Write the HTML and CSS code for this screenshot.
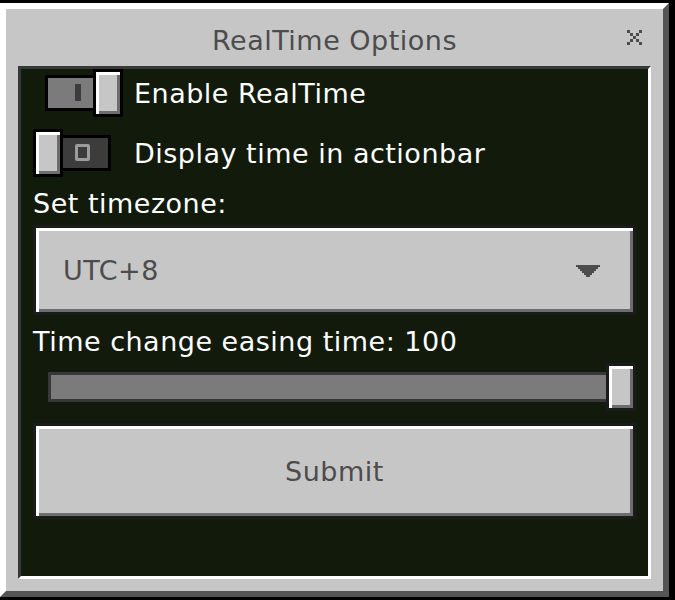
FILE: index.html
```html
<!DOCTYPE html>
<html lang="en">
<head>
    <meta charset="UTF-8">
    <meta name="viewport" content="width=device-width, initial-scale=1.0">
    <title>RealTime Options</title>
    <link rel="stylesheet" href="styles.css">
</head>
<body>

    <div class="form">
        <div class="form-header">
            <span class="form-title">RealTime Options</span>
            <!-- pixel close cross -->
            <svg class="close-btn" width="15" height="15" viewBox="0 0 15 15">
                <path fill="#4c4c4c" d="M0 0h3v3H0zM12 0h3v3h-3zM3 3h3v3H3zM9 3h3v3H9zM6 6h3v3H6zM3 9h3v3H3zM9 9h3v3H9zM0 12h3v3H0zM12 12h3v3h-3z"/>
            </svg>
        </div>

        <div class="form-body">
            <div class="toggle-row">
                <div class="toggle on">
                    <div class="toggle-track"><span class="mark-on"></span></div>
                    <div class="toggle-thumb"></div>
                </div>
                <span class="toggle-label">Enable RealTime</span>
            </div>

            <div class="toggle-row">
                <div class="toggle">
                    <div class="toggle-track"><span class="mark-off"></span></div>
                    <div class="toggle-thumb"></div>
                </div>
                <span class="toggle-label">Display time in actionbar</span>
            </div>

            <div class="field-label">Set timezone:</div>
            <div class="mc-btn dropdown">
                <span>UTC+8</span>
                <svg width="24" height="12" viewBox="0 0 24 12">
                    <path fill="#4c4c4c" d="M0 0H24V2H22V4H20V6H18V8H16V10H14V12H10V10H8V8H6V6H4V4H2V2H0Z"/>
                </svg>
            </div>

            <div class="field-label">Time change easing time: 100</div>
            <div class="slider">
                <div class="slider-track"></div>
                <div class="slider-thumb"></div>
            </div>

            <div class="mc-btn submit-btn">Submit</div>
        </div>
    </div>

</body>
</html>
```

FILE: styles.css
```css
body {
    margin: 0;
    background: #000;
    font-family: "DejaVu Sans", sans-serif;
    font-size: 27px;
    letter-spacing: 0.5px;
}
.form {
    width: 669px;
    height: 594px;
    margin-top: 3px;
    box-sizing: border-box;
    background: #c6c6c6;
    border-top: 6px solid #fff;
    border-left: 6px solid #fff;
    border-right: 6px solid #555;
    border-bottom: 6px solid #555;
    display: flex;
    flex-direction: column;
}
.form-header {
    position: relative;
    height: 57px;
    flex-shrink: 0;
    text-align: center;
}
.form-title {
    display: block;
    padding-top: 7px;
    line-height: 50px;
    color: #4c4c4c;
}
.close-btn {
    position: absolute;
    top: 21px;
    right: 21px;
}

/* dark content panel */
.form-body {
    flex: 1;
    margin: 0 12px 12px 12px;
    padding: 0 12px;
    background: #111a0b;
    border-top: 3px solid #383838;
    border-left: 3px solid #383838;
    border-right: 3px solid #fff;
    border-bottom: 3px solid #fff;
    display: flex;
    flex-direction: column;
    color: #fff;
}

/* toggles */
.toggle-row {
    display: flex;
    align-items: center;
    gap: 11px;
    height: 48px;
    margin-bottom: 12px;
}
.toggle {
    position: relative;
    width: 90px;
    height: 48px;
    flex-shrink: 0;
}
.toggle-track {
    position: absolute;
    left: 12px;
    top: 6px;
    width: 66px;
    height: 36px;
    box-sizing: border-box;
    border: 3px solid #000;
    background: #3c3c3c;
}
.toggle.on .toggle-track {
    background: #7b7b7b;
}
.mark-on {
    position: absolute;
    left: 27px;
    top: 6px;
    width: 6px;
    height: 17px;
    background: #3c3c3c;
}
.mark-off {
    position: absolute;
    left: 27px;
    top: 6px;
    width: 15px;
    height: 17px;
    box-sizing: border-box;
    border: 3px solid #9c9c9c;
    border-radius: 2px;
}
.toggle-thumb {
    position: absolute;
    top: 0;
    left: 0;
    width: 30px;
    height: 48px;
    box-sizing: border-box;
    border: 3px solid #000;
    background: #c6c6c6;
    box-shadow: inset 3px 3px 0 #fff, inset -3px -3px 0 #6d6d6d;
}
.toggle.on .toggle-thumb {
    left: 60px;
}

.field-label {
    height: 36px;
    line-height: 30px;
    padding-bottom: 6px;
    box-sizing: border-box;
    white-space: nowrap;
}

/* bedrock style button face */
.mc-btn {
    box-sizing: border-box;
    border: 3px solid #1b1b1d;
    background: #c6c6c6;
    box-shadow: inset 3px 3px 0 #fff, inset -3px -3px 0 #6d6d6d;
    color: #4c4c4c;
}
.dropdown {
    height: 90px;
    display: flex;
    align-items: center;
    justify-content: space-between;
    padding: 0 33px 0 27px;
    margin-bottom: 12px;
}
.dropdown svg {
    margin-top: 2px;
}

.slider {
    height: 48px;
    margin: 0 0 12px 15px;
    display: flex;
    align-items: center;
}
.slider-track {
    flex: 1;
    height: 30px;
    margin-right: -3px;
    box-sizing: border-box;
    border: 3px solid #383838;
    background: #7b7b7b;
}
.slider-thumb {
    width: 30px;
    height: 48px;
    box-sizing: border-box;
    border: 3px solid #1b1b1d;
    background: #c6c6c6;
    box-shadow: inset 3px 3px 0 #fff, inset -3px -3px 0 #6d6d6d;
}

.submit-btn {
    height: 96px;
    display: flex;
    align-items: center;
    justify-content: center;
}
```
